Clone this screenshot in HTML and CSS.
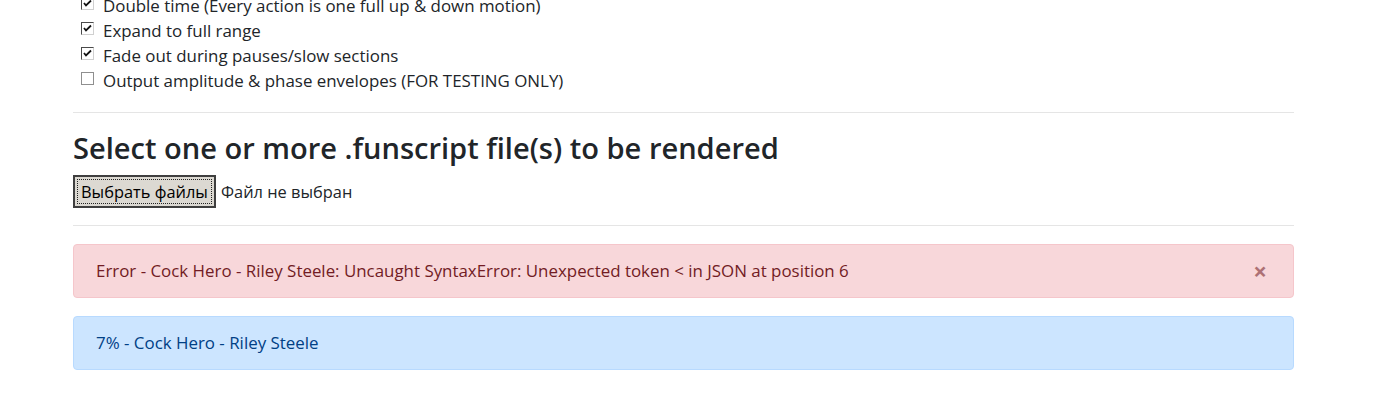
FILE: index.html
```html
<!DOCTYPE html>
<html lang="ru">
<head>
<meta charset="utf-8">
<title>Funscript renderer</title>
<link rel="stylesheet" href="styles.css">
</head>
<body>
<div class="container">
  <div class="options">
    <div class="opt"><span class="cb checked"><svg viewBox="0 0 13 13" width="13" height="13"><path d="M3 6 L5 8.5 L10 3.5" fill="none" stroke="#111" stroke-width="1.8"/></svg></span><span class="lbl">Double time (Every action is one full up &amp; down motion)</span></div>
    <div class="opt"><span class="cb checked"><svg viewBox="0 0 13 13" width="13" height="13"><path d="M3 6 L5 8.5 L10 3.5" fill="none" stroke="#111" stroke-width="1.8"/></svg></span><span class="lbl">Expand to full range</span></div>
    <div class="opt"><span class="cb checked"><svg viewBox="0 0 13 13" width="13" height="13"><path d="M3 6 L5 8.5 L10 3.5" fill="none" stroke="#111" stroke-width="1.8"/></svg></span><span class="lbl">Fade out during pauses/slow sections</span></div>
    <div class="opt"><span class="cb"></span><span class="lbl">Output amplitude &amp; phase envelopes (FOR TESTING ONLY)</span></div>
  </div>
  <hr class="rule rule-top">
  <h2 class="title">Select one or more .funscript file(s) to be rendered</h2>
  <div class="file-row">
    <span class="file-btn"><span class="file-btn-inner">Выбрать файлы</span></span>
    <span class="file-name">Файл не выбран</span>
  </div>
  <hr class="rule rule-bottom">
  <div class="alert alert-danger">
    <span>Error - Cock Hero - Riley Steele: Uncaught SyntaxError: Unexpected token &lt; in JSON at position 6</span>
    <span class="close">×</span>
  </div>
  <div class="alert alert-primary">
    <span>7% - Cock Hero - Riley Steele</span>
  </div>
</div>
</body>
</html>
```
FILE: styles.css
```css
html, body {
  margin: 0;
  padding: 0;
  background: #fff;
}
body {
  font-family: "Open Sans", "Noto Sans", sans-serif;
  font-size: 16.9px;
  color: #212529;
  overflow: hidden;
}
.container {
  margin-left: 73px;
  width: 1221px;
}
.options {
  margin-top: -7.67px;
}
.opt {
  height: 25.33px;
  display: flex;
  align-items: center;
  padding-left: 8px;
}
.cb {
  width: 13px;
  height: 13px;
  flex: none;
  box-sizing: border-box;
  border: 1px solid #8f8f8f;
  background: #fff;
  display: inline-flex;
  margin-right: 9px;
  position: relative;
  top: -2px;
}
.cb.checked {
  border-color: #4a4a4a #d0d0d0 #d0d0d0 #4a4a4a;
}
.cb svg {
  position: absolute;
  left: -1px;
  top: -1px;
}
.lbl {
  white-space: nowrap;
}
.rule {
  border: 0;
  border-top: 1px solid rgba(0,0,0,0.1);
  margin: 0;
  height: 0;
}
.rule-top {
  margin-top: 18.33px;
}
.title {
  margin: 16px 0 7.6px;
  font-size: 29.05px;
  line-height: 38.4px;
  font-weight: 600;
  color: #212529;
}
.file-row {
  display: flex;
  align-items: center;
  height: 33px;
  font-size: 16.4px;
}
.file-btn {
  box-sizing: border-box;
  height: 33px;
  width: 143px;
  border: 2px solid #3f3f3f;
  background: #dcd9d2;
  padding: 2px;
  display: flex;
}
.file-btn-inner {
  flex: 1;
  border: 1px dotted #222;
  display: flex;
  align-items: center;
  justify-content: center;
  color: #000;
}
.file-name {
  margin-left: 5px;
}
.rule-bottom {
  margin-top: 17px;
}
.alert {
  box-sizing: border-box;
  height: 54px;
  border: 1px solid transparent;
  border-radius: 4px;
  padding: 0 20px 0 22px;
  display: flex;
  align-items: center;
  justify-content: space-between;
  margin-top: 18px;
}
.alert-danger {
  background: #f8d7da;
  border-color: #f5c6cb;
  color: #721c24;
}
.alert-primary {
  background: #cce5ff;
  border-color: #b8daff;
  color: #004085;
}
.close {
  font-size: 24px;
  font-weight: 700;
  color: #721c24;
  opacity: 0.55;
  line-height: 1;
  margin-right: 6px;
}
```
